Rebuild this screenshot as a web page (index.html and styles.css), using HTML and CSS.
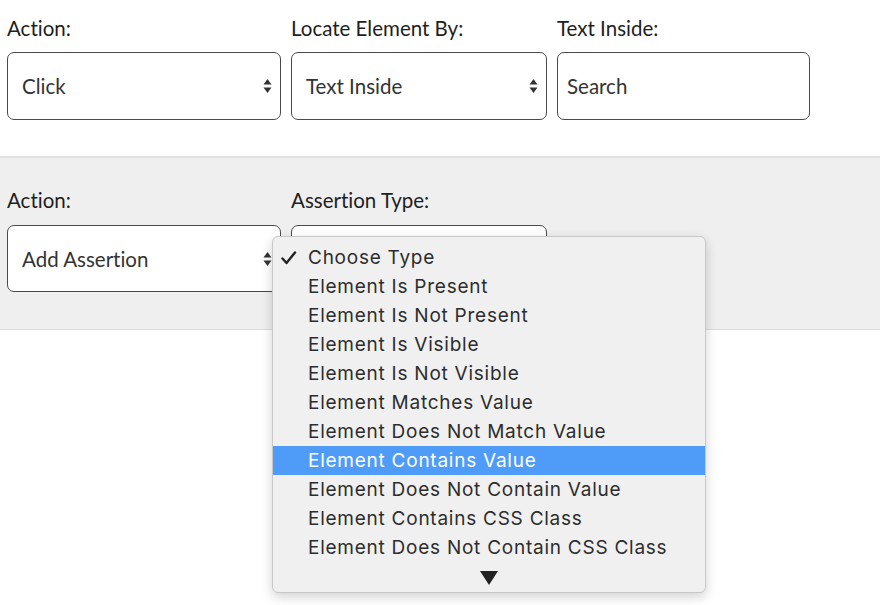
FILE: index.html
```html
<!DOCTYPE html>
<html>
<head>
<meta charset="utf-8">
<link rel="stylesheet" href="styles.css">
</head>
<body>
<div class="row top-row">
  <div class="field w1">
    <div class="label">Action:</div>
    <div class="control select"><span>Click</span><svg class="arrows" width="9" height="16" viewBox="0 0 9 16"><path d="M4.5 1 L8.5 6.5 L0.5 6.5 Z M4.5 15 L8.5 9.5 L0.5 9.5 Z" fill="#333"/></svg></div>
  </div>
  <div class="field w2">
    <div class="label">Locate Element By:</div>
    <div class="control select"><span>Text Inside</span><svg class="arrows" width="9" height="16" viewBox="0 0 9 16"><path d="M4.5 1 L8.5 6.5 L0.5 6.5 Z M4.5 15 L8.5 9.5 L0.5 9.5 Z" fill="#333"/></svg></div>
  </div>
  <div class="field w3">
    <div class="label">Text Inside:</div>
    <div class="control input"><span>Search</span></div>
  </div>
</div>
<div class="gray">
  <div class="row">
    <div class="field w1">
      <div class="label">Action:</div>
      <div class="control select"><span>Add Assertion</span><svg class="arrows" width="9" height="16" viewBox="0 0 9 16"><path d="M4.5 1 L8.5 6.5 L0.5 6.5 Z M4.5 15 L8.5 9.5 L0.5 9.5 Z" fill="#333"/></svg></div>
    </div>
    <div class="field w2">
      <div class="label">Assertion Type:</div>
      <div class="control select"><span></span></div>
    </div>
  </div>
</div>
<div class="menu">
  <div class="item"><svg class="check" width="16" height="14" viewBox="0 0 16 14"><path d="M1.5 7.5 L5.5 12 L14 1.5" fill="none" stroke="#222" stroke-width="2.4" stroke-linecap="round" stroke-linejoin="round"/></svg>Choose Type</div>
  <div class="item">Element Is Present</div>
  <div class="item">Element Is Not Present</div>
  <div class="item">Element Is Visible</div>
  <div class="item">Element Is Not Visible</div>
  <div class="item">Element Matches Value</div>
  <div class="item">Element Does Not Match Value</div>
  <div class="item selected">Element Contains Value</div>
  <div class="item">Element Does Not Contain Value</div>
  <div class="item">Element Contains CSS Class</div>
  <div class="item">Element Does Not Contain CSS Class</div>
  <div class="more"><svg width="18" height="14" viewBox="0 0 18 14"><path d="M0 0 L18 0 L9 14 Z" fill="#222"/></svg></div>
</div>
</body>
</html>
```
FILE: styles.css
```css
html, body {
  margin: 0;
  padding: 0;
  background: #fff;
  font-family: Lato, "Open Sans", sans-serif;
  font-variant-ligatures: none;
}
.row {
  display: flex;
  gap: 10px;
  padding: 0 7px;
}
.top-row {
  padding-top: 17px;
  padding-bottom: 36px;
}
.field {
  display: flex;
  flex-direction: column;
}
.w1 { width: 274px; }
.w2 { width: 256px; }
.w3 { width: 253px; }
.label {
  font-size: 20.5px;
  font-weight: 400;
  color: #1e1e1e;
  height: 22px;
  line-height: 22px;
  margin-bottom: 13px;
}
.control {
  box-sizing: border-box;
  height: 68px;
  border: 1.5px solid #4a4a4a;
  border-radius: 7px;
  background: #fff;
  display: flex;
  align-items: center;
  justify-content: space-between;
  font-size: 20.5px;
  color: #333;
  padding: 0 8px 0 14px;
}
.input { padding-left: 9px; }
.arrows { display: block; }
.gray {
  background: #efeff0;
  border-top: 2px solid #e2e2e3;
  border-bottom: 1px solid #dcdcdc;
  padding-top: 31px;
  padding-bottom: 37px;
}
.gray .label { margin-bottom: 14px; }
.gray .control { height: 67px; }
.menu {
  position: absolute;
  left: 272px;
  top: 236px;
  width: 434px;
  height: 357px;
  box-sizing: border-box;
  background: #f0f0f0;
  border: 1px solid #c8c8c8;
  border-radius: 6px;
  box-shadow: 0 4px 12px rgba(0,0,0,0.18);
  padding-top: 6px;
  font-family: Inter, "DejaVu Sans", sans-serif;
  font-size: 19px;
  letter-spacing: 0.75px;
  color: #2d2d2d;
}
.item {
  position: relative;
  height: 29px;
  line-height: 29px;
  padding-left: 35px;
}
.item.selected {
  background: #4f9cf8;
  color: #fff;
}
.check {
  position: absolute;
  left: 8px;
  top: 8px;
}
.more {
  display: flex;
  justify-content: center;
  padding-top: 9px;
}
```
